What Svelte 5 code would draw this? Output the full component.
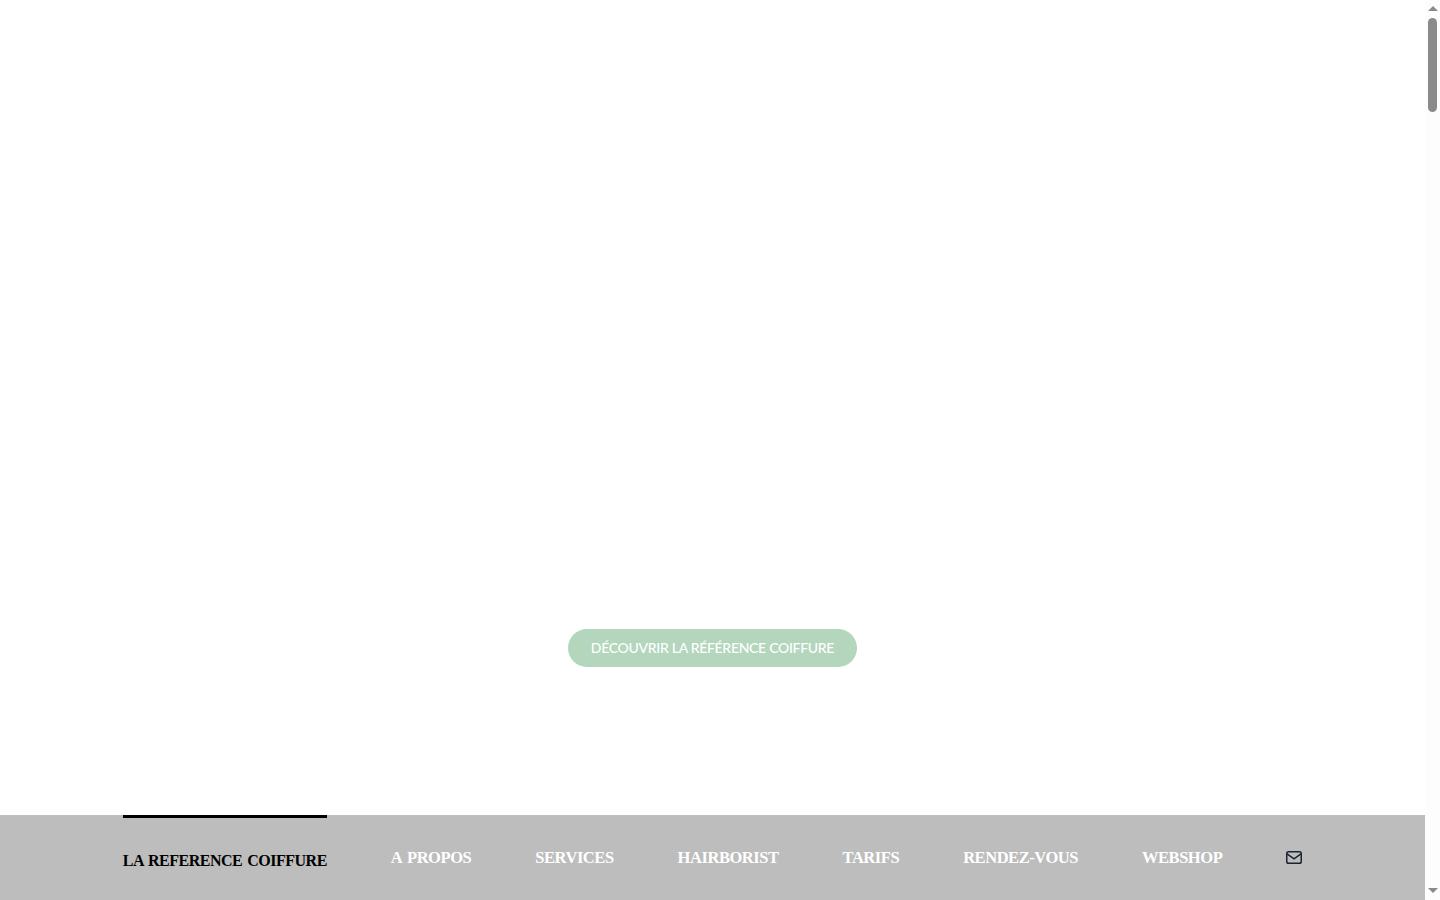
<script>
	const links = ["A PROPOS", "SERVICES", "HAIRBORIST", "TARIFS", "RENDEZ-VOUS", "WEBSHOP"];
</script>

<div class="page">
	<main>
		<section class="hero">
			<a class="cta" href="#about">DÉCOUVRIR LA RÉFÉRENCE COIFFURE</a>
		</section>
		<nav>
			<a class="logo" href="#home">LA REFERENCE COIFFURE</a>
			{#each links as link}
				<a class="link" href={"#" + link.toLowerCase()}>{link}</a>
			{/each}
			<a class="mail" href="#mail" aria-label="E-mail">
				<svg width="16" height="13" viewBox="0 0 16 13" fill="none" stroke="#1b2230" stroke-width="1.5">
					<rect x="0.75" y="0.75" width="14.5" height="11.5" rx="1.8" />
					<path d="M1 2.8 L8 7.8 L15 2.8" />
				</svg>
			</a>
		</nav>
	</main>
	<div class="scrollbar">
		<span class="arrow up"></span>
		<span class="thumb"></span>
		<span class="arrow down"></span>
	</div>
</div>

<style>
	:global(body) {
		background: #fff;
		overflow: hidden;
	}
	.page {
		display: flex;
		height: 900px;
		overflow: hidden;
	}
	main {
		flex: 1;
		display: flex;
		flex-direction: column;
	}
	.hero {
		height: 815px;
		flex: none;
		display: flex;
		flex-direction: column;
		justify-content: flex-end;
		align-items: center;
		padding-bottom: 148px;
		box-sizing: border-box;
	}
	.cta {
		width: 289px;
		height: 38px;
		box-sizing: border-box;
		padding-bottom: 2px;
		display: flex;
		align-items: center;
		justify-content: center;
		border-radius: 19px;
		background: #b3d6bd;
		color: #fff;
		font-family: Lato, "Liberation Sans", sans-serif;
		font-size: 14px;
		font-weight: 500;
		letter-spacing: -0.3px;
		text-decoration: none;
	}
	nav {
		flex: 1;
		background: #bdbdbd;
		display: flex;
		justify-content: center;
		align-items: flex-start;
		gap: 64px;
		font-family: "Liberation Serif", serif;
		font-weight: 700;
	}
	nav a {
		text-decoration: none;
	}
	.logo {
		border-top: 3px solid #000;
		padding-top: 33px;
		color: #000;
		font-size: 16px;
		letter-spacing: -0.5px;
		word-spacing: 1.5px;
		line-height: 20px;
		white-space: nowrap;
	}
	.link {
		padding-top: 33px;
		color: #fff;
		font-size: 16.5px;
		letter-spacing: -0.45px;
		word-spacing: 2px;
		line-height: 20px;
		white-space: nowrap;
	}
	.mail {
		padding-top: 36px;
		line-height: 0;
	}
	.scrollbar {
		width: 15px;
		flex: none;
		display: flex;
		flex-direction: column;
		align-items: center;
		background: #fdfdfd;
	}
	.arrow {
		width: 0;
		height: 0;
		border-left: 5px solid transparent;
		border-right: 5px solid transparent;
	}
	.arrow.up {
		margin-top: 6px;
		border-bottom: 5px solid #8a8a8a;
	}
	.arrow.down {
		margin-top: auto;
		margin-bottom: 7px;
		border-top: 5px solid #8a8a8a;
	}
	.thumb {
		width: 9px;
		height: 94px;
		margin-top: 7px;
		border-radius: 5px;
		background: #8a8a8a;
	}
</style>
